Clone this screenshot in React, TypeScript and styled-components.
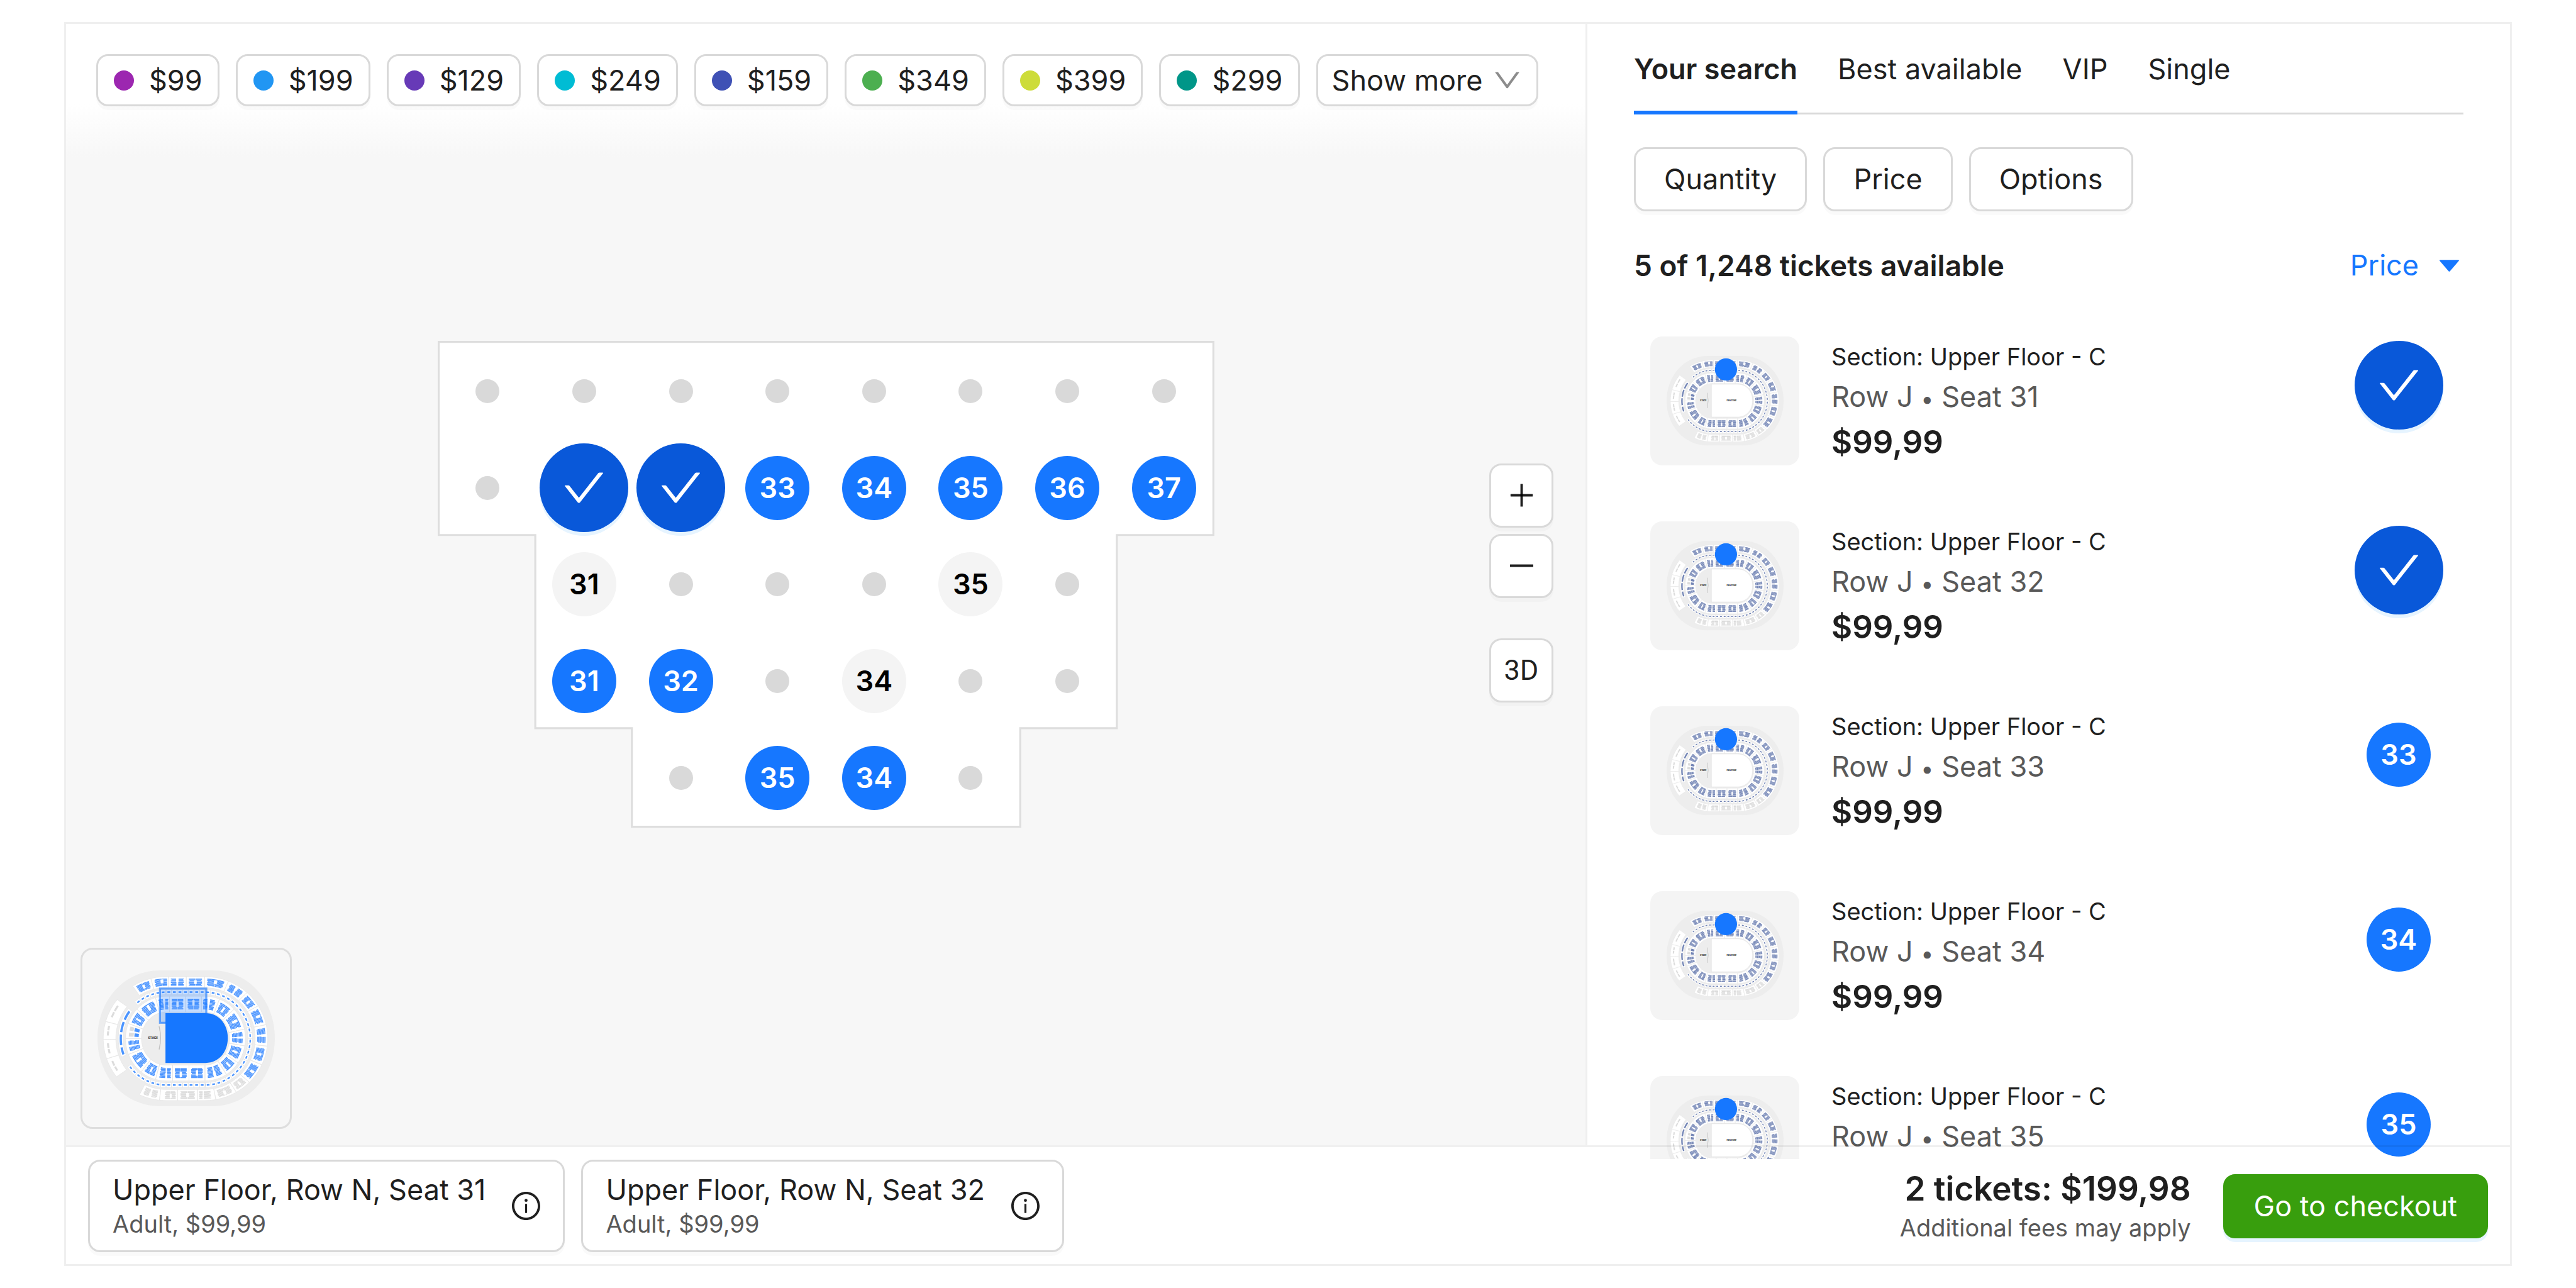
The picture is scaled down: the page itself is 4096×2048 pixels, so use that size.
import React, { useState } from "react";
import styled, { createGlobalStyle, css } from "styled-components";

const color = {
  text: "#1f1f1f",
  muted: "#595959",
  faint: "#8c8c8c",
  border: "#d9d9d9",
  line: "rgba(5, 5, 5, 0.06)",
  canvas: "#f7f7f7",
  primary: "#1677ff",
  primaryDark: "#0958d9",
  primaryTint: "#e6f4ff",
  success: "#389e0d",
};

const GlobalStyle = createGlobalStyle`
  *, *::before, *::after { box-sizing: border-box; }
  body {
    margin: 0;
    background: #ffffff;
    color: ${color.text};
    font-family: Inter, "Liberation Sans", sans-serif;
    font-size: 45px;
    line-height: 70px;
  }
  button, select { font: inherit; color: inherit; cursor: pointer; }
  h2, p, ul { margin: 0; padding: 0; }
  ul { list-style: none; }
`;

/* ---------- icons ---------- */

const Glyph = styled.svg<{ $size: number }>`
  display: block;
  flex: none;
  width: ${(p) => p.$size}px;
  height: ${(p) => p.$size}px;
  fill: currentColor;
`;

const CheckIcon = () => (
  <Glyph $size={67} viewBox="64 64 896 896" aria-hidden="true">
    <path d="M912 190h-69.9c-9.8 0-19.1 4.5-25.1 12.2L404.7 724.5 207 474a32 32 0 00-25.1-12.2H112c-6.7 0-10.4 7.7-6.3 12.9l273.9 347c12.8 16.2 37.4 16.2 50.3 0l488.4-618.9c4.1-5.1.4-12.8-6.3-12.8z" />
  </Glyph>
);

const ChevronIcon = () => (
  <Glyph $size={45} viewBox="64 64 896 896" aria-hidden="true">
    <path d="M884 256h-75c-5.1 0-9.9 2.5-12.9 6.6L512 654.2 227.9 262.6c-3-4.1-7.8-6.6-12.9-6.6h-75c-6.5 0-10.3 7.4-6.5 12.7l352.6 486.1c12.8 17.6 39 17.6 51.7 0l352.6-486.1c3.9-5.3.1-12.7-6.4-12.7z" />
  </Glyph>
);

const CaretIcon = () => (
  <Glyph $size={45} viewBox="0 0 1024 1024" aria-hidden="true">
    <path d="M840.4 300H183.6c-19.7 0-30.7 20.8-18.5 35l328.4 380.8c9.4 10.9 27.5 10.9 37 0L858.9 335c12.2-14.2 1.2-35-18.5-35z" />
  </Glyph>
);

const PlusIcon = () => (
  <Glyph $size={45} viewBox="64 64 896 896" aria-hidden="true">
    <path d="M482 152h60q8 0 8 8v704q0 8-8 8h-60q-8 0-8-8V160q0-8 8-8z" />
    <path d="M168 474h688q8 0 8 8v60q0 8-8 8H168q-8 0-8-8v-60q0-8 8-8z" />
  </Glyph>
);

const MinusIcon = () => (
  <Glyph $size={45} viewBox="64 64 896 896" aria-hidden="true">
    <path d="M872 474H152c-4.4 0-8 3.6-8 8v60c0 4.4 3.6 8 8 8h720c4.4 0 8-3.6 8-8v-60c0-4.4-3.6-8-8-8z" />
  </Glyph>
);

const InfoIcon = () => (
  <Glyph $size={45} viewBox="64 64 896 896" aria-hidden="true">
    <path d="M512 64C264.6 64 64 264.6 64 512s200.6 448 448 448 448-200.6 448-448S759.4 64 512 64zm0 820c-205.4 0-372-166.6-372-372s166.6-372 372-372 372 166.6 372 372-166.6 372-372 372z" />
    <path d="M464 336a48 48 0 1096 0 48 48 0 10-96 0zm72 112h-48c-4.4 0-8 3.6-8 8v272c0 4.4 3.6 8 8 8h48c4.4 0 8-3.6 8-8V456c0-4.4-3.6-8-8-8z" />
  </Glyph>
);

/* ---------- arena drawing ---------- */

/* A tier is a stadium-shaped band; positions run clockwise:
   below 0 = degrees on the left curve, 0-100 = top straight,
   100-280 = right curve, 280-380 = bottom straight, then the left curve again. */
type Tier = { ox: number; oy: number; ix: number; iy: number };
const LEFT = 570;
const RIGHT = 802;
const MID = 616;

const upperTier: Tier = { ox: 374, oy: 369, ix: 299, iy: 303 };
const boxTier: Tier = { ox: 283, oy: 291, ix: 256, iy: 262 };
const lowerTier: Tier = { ox: 241, oy: 252, ix: 146, iy: 158 };

function at(tier: Tier, s: number, v: number): [number, number] {
  const rx = tier.ix + (tier.ox - tier.ix) * v;
  const ry = tier.iy + (tier.oy - tier.iy) * v;
  const rad = Math.PI / 180;
  if (s < 0) return [LEFT + rx * Math.sin(s * rad), MID - ry * Math.cos(s * rad)];
  if (s <= 100) return [LEFT + ((RIGHT - LEFT) * s) / 100, MID - ry];
  if (s <= 280) {
    const a = (s - 100) * rad;
    return [RIGHT + rx * Math.sin(a), MID - ry * Math.cos(a)];
  }
  if (s <= 380) return [RIGHT - ((RIGHT - LEFT) * (s - 280)) / 100, MID + ry];
  const a = (s - 380) * rad;
  return [LEFT - rx * Math.sin(a), MID + ry * Math.cos(a)];
}

function band(tier: Tier, s0: number, s1: number, v0: number, v1: number) {
  const steps = Math.max(2, Math.ceil((s1 - s0) / 6));
  const pts: string[] = [];
  for (let i = 0; i <= steps; i++)
    pts.push(at(tier, s0 + ((s1 - s0) * i) / steps, v1).map((n) => n.toFixed(1)).join(" "));
  for (let i = steps; i >= 0; i--)
    pts.push(at(tier, s0 + ((s1 - s0) * i) / steps, v0).map((n) => n.toFixed(1)).join(" "));
  return "M" + pts.join("L") + "Z";
}

function seatRows(tier: Tier, s0: number, s1: number, kind: number) {
  const w = s1 - s0;
  let d = "";
  for (let j = 0; j < 8; j++) {
    const v = 0.17 + j * 0.084;
    const middle = kind % 3 === 0 ? j > 1 && j < 6 : kind % 3 === 1 ? j > 2 && j < 7 : j > 3;
    const gap = middle ? 0.07 : kind % 3 === 2 ? 0.05 : 0.01;
    const edge = (j + kind) % 4 === 0 ? 0.18 : 0.14;
    d += band(tier, s0 + w * edge, s0 + w * (0.5 - gap), v, v + 0.068);
    d += band(tier, s0 + w * (0.5 + gap), s0 + w * (1 - edge), v, v + 0.068);
  }
  return d;
}

const upperStops = [-32, -14, 6, 52, 99, 122, 142, 158, 177, 197, 215, 235, 250, 270, 299, 350, 386, 405];
const sideStops = [-128, -109, -91, -74, -51];
const lowerStops = [-69, -46, -15, 9, 50, 91, 121, 146, 177, 200, 225, 248, 280, 321, 363, 395, 418, 448, 470, 491];
const sideBars = [[-110, -101], [-98, -85], [-82, -69], [-66, -54]];

const boxStops: number[] = [];
for (let s = -41; s < 0; s += 6.8) boxStops.push(s);
for (let s = 0; s < 100; s += 14.3) boxStops.push(s);
for (let s = 100; s < 280; s += 6.9) boxStops.push(s);
for (let s = 280; s < 380; s += 14.3) boxStops.push(s);
for (let s = 380; s < 438; s += 6.8) boxStops.push(s);

const pairs = (stops: number[]) => stops.slice(1).map((s, i) => [stops[i], s]);

const sectionPath = [
  ...pairs(upperStops).map(([a, b]) => band(upperTier, a, b, 0, 1)),
  ...pairs(sideStops).map(([a, b]) => band(upperTier, a, b, 0, 1)),
  ...pairs(boxStops).map(([a, b]) => band(boxTier, a, b, 0, 1)),
  ...pairs(lowerStops).map(([a, b]) => band(lowerTier, a, b, 0, 1)),
  band(boxTier, -112, -52, 0, 1.05),
].join("");

const openSeatPath = [
  ...pairs(upperStops).slice(0, 11).map(([a, b], i) => seatRows(upperTier, a, b, i)),
  ...pairs(boxStops).map(([a, b]) => band(boxTier, a + (b - a) * 0.25, b - (b - a) * 0.25, 0.34, 0.66)),
  ...pairs(lowerStops).slice(0, 18).map(([a, b], i) => seatRows(lowerTier, a, b, i)),
  ...sideBars.map(([a, b]) => band(boxTier, a, b, 0.25, 0.75)),
  band(lowerTier, 473, 479, 0.18, 0.45),
  band(lowerTier, 482, 488, 0.18, 0.5),
].join("");

const soldSeatPath = [
  ...pairs(upperStops).slice(11).map(([a, b], i) => seatRows(upperTier, a, b, i)),
  ...pairs(sideStops).map(
    ([a, b]) =>
      band(upperTier, a + (b - a) * 0.24, a + (b - a) * 0.48, 0.56, 0.72) +
      band(upperTier, a + (b - a) * 0.54, a + (b - a) * 0.8, 0.56, 0.72)
  ),
  band(lowerTier, 473, 479, 0.5, 0.8),
  band(lowerTier, 482, 488, 0.55, 0.8),
].join("");

const ArenaSvg = styled.svg<{ $width: number }>`
  display: block;
  width: ${(p) => p.$width}px;
  height: auto;
  font-family: Inter, "Liberation Sans", sans-serif;
  font-weight: 700;
  font-size: 18px;
  text-anchor: middle;
`;

function Arena({ width, overview }: { width: number; overview?: boolean }) {
  const seat = overview ? "#4a94ff" : "#7486b6";
  return (
    <ArenaSvg $width={width} viewBox="162 210 1056 808" role="img" aria-label="Arena map">
      <path d="M535 210H845C1062 210 1218 390 1218 614S1062 1018 845 1018H535C318 1018 162 838 162 614S318 210 535 210Z" fill="#ededed" />
      <path d={sectionPath} fill="#ffffff" stroke="#e6e6e6" strokeWidth="3" />
      <path d={soldSeatPath} fill="#dcdcdc" />
      <path d={openSeatPath} fill={seat} />
      <path d="M529 543Q546 612 529 681" fill="none" stroke="#c0c0c0" strokeWidth="5" />
      <text x="493" y="618" fill="#262626">STAGE</text>
      {overview && (
        <rect x="534" y="318" width="276" height="204" fill="rgba(22,119,255,0.25)" stroke="rgba(22,119,255,0.62)" strokeWidth="12" />
      )}
      <path
        d="M567 465H806C888 465 938 534 938 613S888 761 806 761H567Z"
        fill={overview ? color.primary : "#ffffff"}
        stroke={overview ? "none" : "#dedede"}
        strokeWidth="3"
      />
      {!overview && <text x="749" y="618" fill="#262626">FAN ZONE</text>}
      {!overview && <circle cx="698" cy="332" r="100" fill={color.primary} />}
    </ArenaSvg>
  );
}

/* ---------- shell ---------- */

const Page = styled.div`
  height: 100vh;
  padding: 35px 102px;
`;

const Frame = styled.div`
  display: flex;
  flex-direction: column;
  height: 100%;
  border: 3px solid #efefef;
`;

const Main = styled.main`
  flex: 1;
  min-height: 0;
  display: grid;
  grid-template-columns: 2416fr 1470fr;
`;

const raised = css`
  background: #ffffff;
  border: 3px solid ${color.border};
  border-radius: 19px;
  box-shadow: 0 6px 0 rgba(0, 0, 0, 0.02);
`;

/* ---------- map ---------- */

const MapPane = styled.section`
  display: grid;
  grid-template-columns: minmax(0, 1fr);
  grid-template-rows: minmax(0, 1fr);
  background: ${color.canvas};

  > * {
    grid-area: 1 / 1;
  }
`;

const Legend = styled.div`
  align-self: start;
  display: flex;
  gap: 26px;
  height: 212px;
  padding: 48px 48px 0;
  background: linear-gradient(#ffffff 60%, ${color.canvas});
`;

const Chip = styled.button`
  ${raised}
  display: flex;
  align-items: center;
  gap: 24px;
  height: 83px;
  padding: 0 24px 0 25px;
  white-space: nowrap;
`;

const MoreChip = styled(Chip)`
  gap: 16px;
  padding: 0 24px 0 22px;

  svg {
    color: ${color.faint};
  }
`;

const Swatch = styled.span<{ $color: string }>`
  width: 32px;
  height: 32px;
  border-radius: 50%;
  background: ${(p) => p.$color};
`;

const SeatMap = styled.div`
  place-self: center;
  position: relative;
  display: grid;
  grid-template-columns: repeat(8, 1fr);
  grid-template-rows: repeat(5, 1fr);
  width: 1235px;
  aspect-ratio: 1544 / 968;
  padding: 3px;
`;

const Outline = styled.svg`
  position: absolute;
  inset: 0;
  width: 100%;
  height: 100%;
`;

const Cell = styled.div<{ $row: number; $col: number }>`
  grid-row: ${(p) => p.$row};
  grid-column: ${(p) => p.$col};
  display: grid;
  place-items: center;
  min-width: 0;
  min-height: 0;
`;

type SeatState = "free" | "picked" | "other" | "sold";

const SeatButton = styled.button<{ $state: SeatState }>`
  position: relative;
  display: grid;
  place-items: center;
  flex: none;
  padding: 0;
  border: 0;
  border-radius: 50%;
  font-weight: 600;
  ${(p) =>
    ({
      free: css`
        width: 102px;
        height: 102px;
        background: ${color.primary};
        color: #ffffff;
      `,
      picked: css`
        width: 141px;
        height: 141px;
        background: ${color.primaryDark};
        color: #ffffff;
        box-shadow: 0 6px 0 ${color.primaryTint};
      `,
      other: css`
        width: 102px;
        height: 102px;
        background: #f4f4f4;
        color: #000000;
      `,
      sold: css`
        width: 38px;
        height: 38px;
        background: ${color.border};
      `,
    })[p.$state]}
`;

const ZoomStack = styled.div`
  place-self: center end;
  display: grid;
  gap: 10px;
  margin: 0 51px 6px 0;
`;

const SquareButton = styled.button`
  ${raised}
  display: grid;
  place-items: center;
  width: 102px;
  height: 102px;
  padding: 0;
  color: rgba(0, 0, 0, 0.88);
`;

const ViewButton = styled(SquareButton)`
  margin-top: 54px;
  font-family: Roboto, Inter, sans-serif;
`;

const MiniMap = styled.div`
  place-self: end start;
  display: grid;
  place-items: center;
  width: 336px;
  height: 288px;
  margin: 0 0 26px 23px;
  border: 3px solid #dedede;
  border-radius: 19px;
`;

/* ---------- side panel ---------- */

const Panel = styled.section`
  display: flex;
  flex-direction: column;
  min-height: 0;
  min-width: 0;
  padding: 0 74px;
  border-left: 3px solid #efefef;
`;

const Tabs = styled.div`
  display: flex;
  gap: 64px;
  box-shadow: inset 0 -3px 0 ${color.border};
`;

const Tab = styled.button<{ $active: boolean }>`
  padding: 37px 0;
  border: 0;
  background: none;
  white-space: nowrap;
  ${(p) =>
    p.$active &&
    css`
      font-weight: 600;
      box-shadow: inset 0 -6px 0 ${color.primary};
    `}
`;

const Filters = styled.div`
  display: flex;
  gap: 26px;
  margin-top: 52px;
`;

const FilterButton = styled.button`
  ${raised}
  height: 102px;
  padding: 0 45px;
`;

const ResultBar = styled.div`
  display: flex;
  justify-content: space-between;
  align-items: center;
  margin-top: 51px;
`;

const ResultCount = styled.h2`
  font-size: 46px;
  line-height: 70px;
  font-weight: 600;
`;

const Sort = styled.label`
  display: flex;
  align-items: center;
  gap: 26px;
  color: ${color.primary};
`;

const SortSelect = styled.select`
  appearance: none;
  height: 70px;
  padding: 0;
  border: 0;
  background: none;
  field-sizing: content;
`;

const Tickets = styled.ul`
  flex: 1;
  min-height: 0;
  display: flex;
  flex-direction: column;
  gap: 89px;
  margin: 78px 0 -22px;
  padding: 0 26px;
  overflow: hidden;
`;

const Ticket = styled.li`
  flex: none;
  display: flex;
  align-items: flex-start;
  height: 205px;
`;

const Thumb = styled.div`
  display: grid;
  place-items: center;
  width: 237px;
  height: 205px;
  border-radius: 19px;
  background: #f4f4f4;
`;

const TicketText = styled.div`
  flex: 1;
  margin-left: 51px;
`;

const Section = styled.p`
  font-size: 38px;
  line-height: 64px;
`;

const Place = styled.p`
  line-height: 64px;
  color: ${color.muted};
`;

const Bullet = styled.span`
  font-size: 36px;
  line-height: 1;
`;

const Price = styled.p`
  font-size: 51px;
  line-height: 80px;
  font-weight: 600;
`;

const TicketAction = styled.div`
  display: grid;
  place-items: center;
  width: 154px;
  height: 154px;
`;

/* ---------- footer ---------- */

const Footer = styled.footer`
  position: relative;
  display: flex;
  align-items: center;
  gap: 26px;
  padding: 20px 35px 19px;
  border-top: 3px solid ${color.line};
`;

const CartCard = styled.div`
  ${raised}
  display: flex;
  align-items: center;
  gap: 42px;
  height: 147px;
  padding: 0 36px;
`;

const CartTitle = styled.p`
  line-height: 56px;
`;

const CartNote = styled.p`
  font-size: 38px;
  line-height: 52px;
  color: ${color.muted};
`;

const IconButton = styled.button`
  padding: 0;
  border: 0;
  background: none;
`;

const Summary = styled.div`
  margin-left: auto;
  padding-top: 4px;
  text-align: right;
`;

const Total = styled.p`
  font-size: 53px;
  line-height: 64px;
  font-weight: 600;
`;

const Fees = styled.p`
  font-size: 38px;
  line-height: 60px;
  color: ${color.muted};
`;

const Checkout = styled.button`
  height: 102px;
  margin-left: 25px;
  padding: 0 46px;
  border: 3px solid ${color.success};
  border-radius: 19px;
  background: ${color.success};
  color: #ffffff;
  box-shadow: 0 6px 0 ${color.primaryTint};
`;

/* ---------- data ---------- */

const prices = [
  ["$99", "#9c27b0"],
  ["$199", "#2196f3"],
  ["$129", "#673ab7"],
  ["$249", "#00bcd4"],
  ["$159", "#3f51b5"],
  ["$349", "#4caf50"],
  ["$399", "#cddc39"],
  ["$299", "#009688"],
];

/* "." sold, "v" picked, "o" prefix belongs to another price group */
const seatRowsData: { start: number; seats: string[] }[] = [
  { start: 1, seats: [".", ".", ".", ".", ".", ".", ".", "."] },
  { start: 1, seats: [".", "v31", "v32", "33", "34", "35", "36", "37"] },
  { start: 2, seats: ["o31", ".", ".", ".", "o35", "."] },
  { start: 2, seats: ["31", "32", ".", "o34", ".", "."] },
  { start: 3, seats: [".", "35", "34", "."] },
];

const tabs = ["Your search", "Best available", "VIP", "Single"];
const filters = ["Quantity", "Price", "Options"];
const tickets: { seat: number; price?: string }[] = [
  { seat: 31, price: "$99,99" },
  { seat: 32, price: "$99,99" },
  { seat: 33, price: "$99,99" },
  { seat: 34, price: "$99,99" },
  { seat: 35 },
];
const cart = [31, 32];

function Seat({ code }: { code: string }) {
  if (code === ".") return <SeatButton $state="sold" disabled aria-label="Unavailable seat" />;
  const n = code.replace(/\D/g, "");
  if (code[0] === "v")
    return (
      <SeatButton $state="picked" aria-label={`Seat ${n}, selected`}>
        <CheckIcon />
      </SeatButton>
    );
  return <SeatButton $state={code[0] === "o" ? "other" : "free"}>{n}</SeatButton>;
}

export default function App() {
  const [active, setActive] = useState(tabs[0]);

  return (
    <Page>
      <GlobalStyle />
      <Frame>
        <Main>
          <MapPane>
            <SeatMap>
              <Outline viewBox="0 0 1544 968" preserveAspectRatio="none" aria-hidden="true">
                <path
                  d="M2 2H1542V386H1350V770H1158V966H386V770H194V386H2Z"
                  fill="#ffffff"
                  stroke="#dedede"
                  strokeWidth="4"
                />
              </Outline>
              {seatRowsData.map((row, r) =>
                row.seats.map((code, c) => (
                  <Cell key={`${r}-${c}`} $row={r + 1} $col={row.start + c}>
                    <Seat code={code} />
                  </Cell>
                ))
              )}
            </SeatMap>
            <Legend>
              {prices.map(([label, dot]) => (
                <Chip key={label}>
                  <Swatch $color={dot} />
                  {label}
                </Chip>
              ))}
              <MoreChip>
                Show more
                <ChevronIcon />
              </MoreChip>
            </Legend>
            <ZoomStack>
              <SquareButton aria-label="Zoom in">
                <PlusIcon />
              </SquareButton>
              <SquareButton aria-label="Zoom out">
                <MinusIcon />
              </SquareButton>
              <ViewButton>3D</ViewButton>
            </ZoomStack>
            <MiniMap>
              <Arena width={282} overview />
            </MiniMap>
          </MapPane>

          <Panel>
            <Tabs role="tablist">
              {tabs.map((t) => (
                <Tab key={t} role="tab" aria-selected={t === active} $active={t === active} onClick={() => setActive(t)}>
                  {t}
                </Tab>
              ))}
            </Tabs>
            <Filters>
              {filters.map((f) => (
                <FilterButton key={f}>{f}</FilterButton>
              ))}
            </Filters>
            <ResultBar>
              <ResultCount>5 of 1,248 tickets available</ResultCount>
              <Sort>
                <SortSelect aria-label="Sort tickets by" defaultValue="Price">
                  <option>Price</option>
                </SortSelect>
                <CaretIcon />
              </Sort>
            </ResultBar>
            <Tickets>
              {tickets.map(({ seat, price }) => (
                <Ticket key={seat}>
                  <Thumb>
                    <Arena width={186} />
                  </Thumb>
                  <TicketText>
                    <Section>Section: Upper Floor - C</Section>
                    <Place>
                      Row J <Bullet>•</Bullet> Seat {seat}
                    </Place>
                    {price && <Price>{price}</Price>}
                  </TicketText>
                  <TicketAction>
                    <Seat code={cart.includes(seat) ? `v${seat}` : `${seat}`} />
                  </TicketAction>
                </Ticket>
              ))}
            </Tickets>
          </Panel>
        </Main>

        <Footer>
          {cart.map((n) => (
            <CartCard key={n}>
              <div>
                <CartTitle>Upper Floor, Row N, Seat {n}</CartTitle>
                <CartNote>Adult, $99,99</CartNote>
              </div>
              <IconButton aria-label={`Details for seat ${n}`}>
                <InfoIcon />
              </IconButton>
            </CartCard>
          ))}
          <Summary>
            <Total>2 tickets: $199,98</Total>
            <Fees>Additional fees may apply</Fees>
          </Summary>
          <Checkout>Go to checkout</Checkout>
        </Footer>
      </Frame>
    </Page>
  );
}
